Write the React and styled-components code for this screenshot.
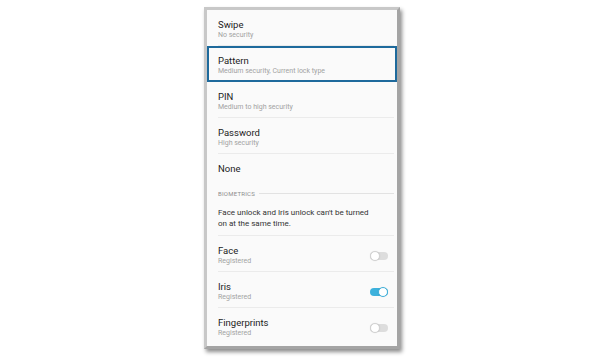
import React from "react";
import styled, { createGlobalStyle } from "styled-components";

const GlobalStyle = createGlobalStyle`
  html, body {
    margin: 0;
    padding: 0;
    background: #ffffff;
  }
  body {
    font-family: Roboto, "Liberation Sans", Arial, sans-serif;
  }
`;

const Page = styled.div`
  width: 600px;
  height: 360px;
  padding: 7px 0 0 204px;
  box-sizing: border-box;
`;

const Phone = styled.div`
  width: 190px;
  height: 336px;
  border: 3px solid #c8c8c8;
  border-right-color: #a4a4a4;
  border-bottom-color: #a4a4a4;
  background: #fafafa;
  box-shadow: 2px 3px 4px rgba(0, 0, 0, 0.45);
  overflow: hidden;
`;

const Row = styled.div`
  padding-left: 11px;
  box-shadow: ${(p) => (p.$selected ? "inset 0 0 0 2px #1e6a9c" : "none")};
`;

const Inner = styled.div`
  display: flex;
  align-items: center;
  justify-content: space-between;
  margin-right: 3px;
  padding: ${(p) => (p.$single ? "9px 6px 7px 0" : "9px 6px 5px 0")};
  border-bottom: 1px solid ${(p) => (p.$noLine ? "transparent" : "#ebebeb")};
`;

const Texts = styled.div`
  display: flex;
  flex-direction: column;
`;

const Title = styled.div`
  font-size: 9.5px;
  line-height: 11px;
  font-weight: 400;
  color: #1c1c1c;
`;

const Sub = styled.div`
  margin-top: 1px;
  font-size: 7px;
  line-height: 9px;
  color: #a2a2a2;
`;

const Header = styled.div`
  display: flex;
  align-items: center;
  gap: 4px;
  height: 22px;
  padding: 0 3px 0 11px;
  font-size: 6px;
  letter-spacing: 0.25px;
  color: #8c8c8c;

  &::after {
    content: "";
    flex: 1;
    height: 1px;
    background: #e2e2e2;
  }
`;

const Note = styled.div`
  margin: 0 3px 0 11px;
  padding: 3px 0 6px;
  font-size: 8px;
  line-height: 11px;
  color: #333333;
  border-bottom: 1px solid #ebebeb;
`;

const Toggle = styled.div`
  width: 18px;
  height: 8px;
  border-radius: 4px;
  background: ${(p) => (p.$on ? "#3db1dc" : "#dddddd")};
  display: flex;
  align-items: center;
  justify-content: ${(p) => (p.$on ? "flex-end" : "flex-start")};
`;

const Knob = styled.div`
  width: 10px;
  height: 10px;
  border-radius: 50%;
  background: #ffffff;
  border: 1px solid ${(p) => (p.$on ? "#3db1dc" : "#d2d2d2")};
  box-sizing: border-box;
  box-shadow: 0 0 1px rgba(0, 0, 0, 0.15);
`;

const lockTypes = [
  { title: "Swipe", sub: "No security" },
  { title: "Pattern", sub: "Medium security, Current lock type", selected: true },
  { title: "PIN", sub: "Medium to high security" },
  { title: "Password", sub: "High security" },
];

const biometrics = [
  { title: "Face", on: false },
  { title: "Iris", on: true },
  { title: "Fingerprints", on: false, last: true },
];

const App = () => {
  return (
    <>
      <GlobalStyle />
      <Page>
        <Phone>
          {lockTypes.map((item) => (
            <Row key={item.title} $selected={item.selected}>
              <Inner $noLine={item.selected}>
                <Texts>
                  <Title>{item.title}</Title>
                  <Sub>{item.sub}</Sub>
                </Texts>
              </Inner>
            </Row>
          ))}
          <Row>
            <Inner $single $noLine>
              <Title>None</Title>
            </Inner>
          </Row>
          <Header>BIOMETRICS</Header>
          <Note>
            Face unlock and Iris unlock can't be turned
            <br />
            on at the same time.
          </Note>
          {biometrics.map((item) => (
            <Row key={item.title}>
              <Inner $noLine={item.last}>
                <Texts>
                  <Title>{item.title}</Title>
                  <Sub>Registered</Sub>
                </Texts>
                <Toggle $on={item.on}>
                  <Knob $on={item.on} />
                </Toggle>
              </Inner>
            </Row>
          ))}
        </Phone>
      </Page>
    </>
  );
};

export default App;
